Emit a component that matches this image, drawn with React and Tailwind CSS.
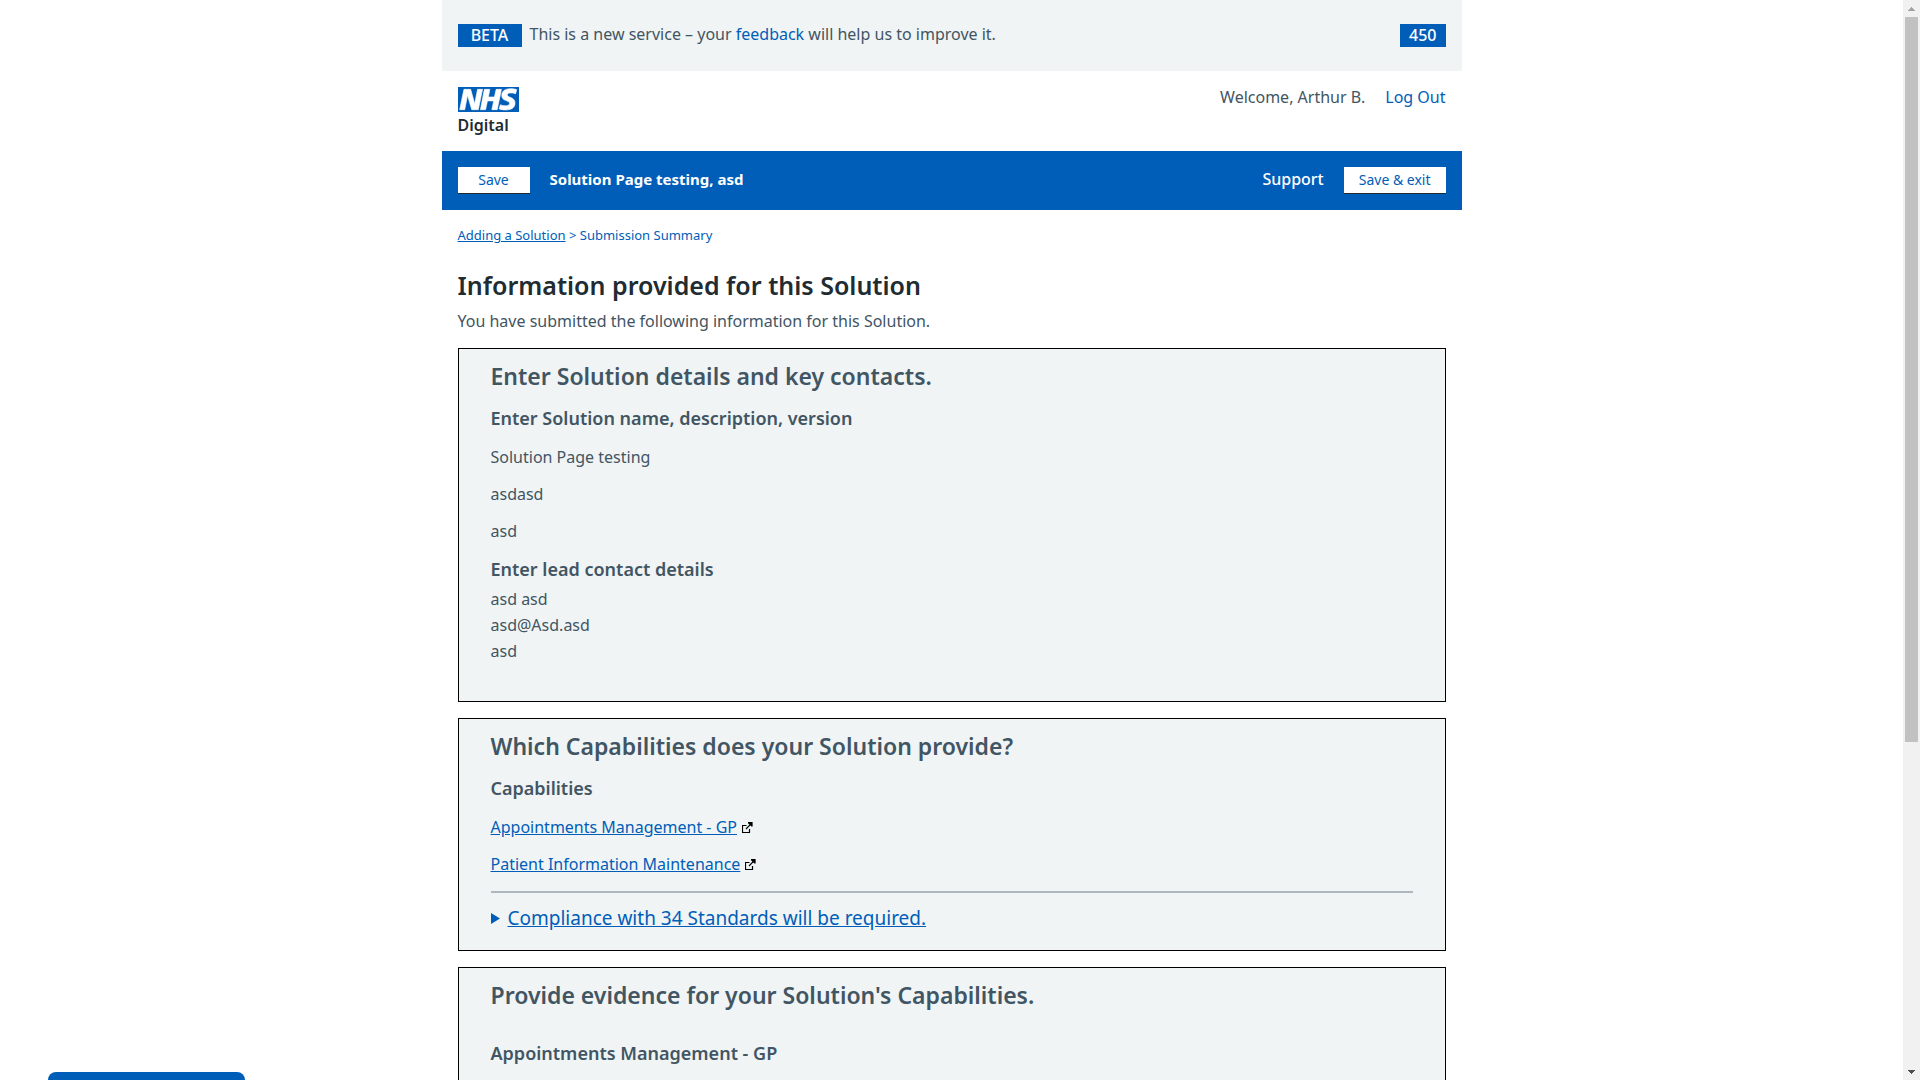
import React from 'react';

const font = "font-['Noto_Sans','Open_Sans',sans-serif]";

function NhsLogo() {
  return (
    <svg viewBox="0 0 40 16" className="block h-[25px] w-[61px]" preserveAspectRatio="none" role="img" aria-label="NHS">
      <path fill="#005EB8" d="M0 0h40v16H0z" />
      <path
        fill="#fff"
        stroke="#fff"
        strokeWidth="0.4"
        d="M3.9 1.5h4.4l2.6 9h.1l1.8-9h3.3l-2.8 13H9l-2.7-9h-.1l-1.8 9H1.1zM17.3 1.5h3.6l-1 4.9h4L25 1.5h3.5l-2.8 13h-3.5l1.2-5.6h-4.1l-1.2 5.6h-3.4zM37.7 4.4c-.7-.3-1.6-.6-2.9-.6-1.4 0-2.5.2-2.5 1.3 0 1.8 5.1 1.2 5.1 5.1 0 3.6-3.3 4.5-6.4 4.5-1.3 0-2.9-.3-4-.7l.8-2.7c.7.4 2.1.7 3.2.7s2.8-.2 2.8-1.5c0-2.1-5.1-1.3-5.1-5 0-3.4 2.9-4.4 5.8-4.4 1.6 0 3.1.2 4 .6z"
      />
    </svg>
  );
}

function ExternalIcon() {
  return (
    <svg viewBox="0 0 11 12" className="h-3 w-[11px]" fill="none" stroke="#000" strokeWidth="1.2" aria-hidden="true">
      <path d="M4.5 4.5h-4v7h7V8M4 8l5.2-5.4" />
      <path fill="#000" stroke="none" d="M6 1h4.6v4.6H9.4L6 2.2z" />
    </svg>
  );
}

function Panel({ title, children, className = '' }) {
  return (
    <section className={`border border-black bg-[#F0F4F5] px-8 pt-[11px] ${className}`}>
      <h2 className="text-[23px] leading-8 font-semibold">{title}</h2>
      {children}
    </section>
  );
}

function ExternalLink({ children }) {
  return (
    <li className="flex items-center gap-[5px]">
      <a href="#" className="text-[#005EB8] underline">{children}</a>
      <ExternalIcon />
    </li>
  );
}

export default function App() {
  return (
    <div className={`flex h-screen overflow-hidden bg-white text-[16px] leading-[26px] text-[#425563] ${font}`}>
      <div className="min-w-0 flex-1 overflow-hidden">
        <div className="mx-auto max-w-[1020px]">
          <div className="flex items-start justify-between bg-[#F0F4F5] px-4 pt-[21px] pb-6">
            <p className="flex items-start gap-2">
              <strong className="mt-[3px] w-16 bg-[#005EB8] text-center text-[16px] leading-[23px] font-medium text-white">BETA</strong>
              <span>
                This is a new service – your <a href="#" className="text-[#005EB8]">feedback</a> will help us to improve it.
              </span>
            </p>
            <span className="mt-[3px] bg-[#005EB8] px-[9px] leading-[23px] font-medium text-white">450</span>
          </div>

          <header className="flex items-start justify-between px-4 pt-4 pb-3">
            <a href="#" className="block text-[#212B32]">
              <NhsLogo />
              <span className="block leading-[27px] font-semibold">Digital</span>
            </a>
            <div className="-mt-[3px] flex gap-5">
              <span>Welcome, Arthur B.</span>
              <a href="#" className="text-[#005EB8]">Log Out</a>
            </div>
          </header>

          <nav className="flex items-start justify-between bg-[#005EB8] px-4 py-4 text-white">
            <div className="flex items-start gap-5">
              <button type="button" className="w-[72px] border-b border-[#212B32] bg-white text-[14px] text-[#005EB8]">Save</button>
              <span className="text-[15px] leading-6 font-bold">Solution Page testing, asd</span>
            </div>
            <div className="flex items-start gap-5">
              <a href="#" className="leading-6 font-medium">Support</a>
              <button type="button" className="border-b border-[#212B32] bg-white px-[15px] text-[14px] text-[#005EB8]">Save &amp; exit</button>
            </div>
          </nav>

          <main className="px-4">
            <p className="mt-[15px] text-[13px] leading-5 text-[#005EB8]">
              <a href="#" className="underline">Adding a Solution</a> &gt; Submission Summary
            </p>
            <h1 className="mt-6 text-[25px] leading-8 font-semibold text-[#212B32]">Information provided for this Solution</h1>
            <p className="mt-[7px]">You have submitted the following information for this Solution.</p>

            <div className="mt-[14px] flex flex-col gap-4">
              <Panel title="Enter Solution details and key contacts." className="pb-[37px]">
                <h3 className="mt-[14px] text-[18px] leading-6 font-semibold">Enter Solution name, description, version</h3>
                <div className="mt-[14px] flex flex-col gap-[11px]">
                  <p>Solution Page testing</p>
                  <p>asdasd</p>
                  <p>asd</p>
                </div>
                <h3 className="mt-[13px] text-[18px] leading-6 font-semibold">Enter lead contact details</h3>
                <div className="mt-[5px]">
                  <p>asd asd</p>
                  <p>asd@Asd.asd</p>
                  <p>asd</p>
                </div>
              </Panel>

              <Panel title="Which Capabilities does your Solution provide?" className="pb-[18px]">
                <h3 className="mt-[14px] text-[18px] leading-6 font-semibold">Capabilities</h3>
                <ul className="mt-[14px] flex flex-col gap-[11px]">
                  <ExternalLink>Appointments Management - GP</ExternalLink>
                  <ExternalLink>Patient Information Maintenance</ExternalLink>
                </ul>
                <hr className="mt-[14px] border-t-2 border-[#AEB7BD]" />
                <details className="mt-[11px]">
                  <summary className="flex cursor-pointer list-none items-center gap-2 text-[19px] leading-7 text-[#005EB8]">
                    <svg viewBox="0 0 9 11" className="h-[11px] w-[9px]" aria-hidden="true">
                      <path fill="#005EB8" d="M0 0l9 5.5L0 11z" />
                    </svg>
                    <span className="underline">Compliance with 34 Standards will be required.</span>
                  </summary>
                </details>
              </Panel>

              <Panel title="Provide evidence for your Solution's Capabilities." className="pb-8">
                <h3 className="mt-[30px] text-[18px] leading-6 font-semibold">Appointments Management - GP</h3>
              </Panel>
            </div>
          </main>
        </div>
      </div>

      <div className="flex w-[17px] flex-none flex-col items-center bg-[#F1F1F1]" aria-hidden="true">
        <div className="flex h-[17px] items-center">
          <svg viewBox="0 0 7 4" className="h-1 w-[7px]" shapeRendering="crispEdges"><path fill="#A3A3A3" d="M3 0h1v1h1v1h1v1h1v1H0V3h1V2h1V1h1z" /></svg>
        </div>
        <div className="w-[13px] flex-[725] bg-[#C1C1C1]" />
        <div className="flex-[321]" />
        <div className="flex h-[17px] items-center">
          <svg viewBox="0 0 7 4" className="h-1 w-[7px]" shapeRendering="crispEdges"><path fill="#505050" d="M0 0h7v1H6v1H5v1H4v1H3V3H2V2H1V1H0z" /></svg>
        </div>
      </div>

      <div className="fixed bottom-0 left-12 h-2 w-[197px] rounded-t-lg bg-[#005EB8]" />
    </div>
  );
}
